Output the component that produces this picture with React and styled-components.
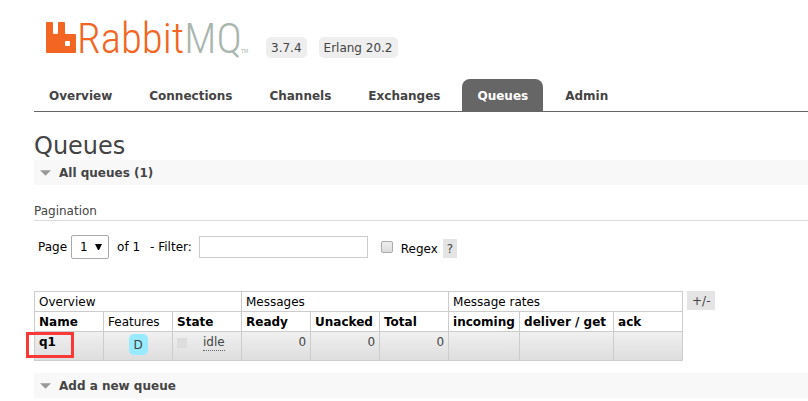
import React from "react";
import styled, { createGlobalStyle } from "styled-components";

const GlobalStyle = createGlobalStyle`
  *, *::before, *::after { box-sizing: border-box; }
  body {
    margin: 0;
    background: #fff;
    color: #444;
    font: 12px/16px Verdana, "DejaVu Sans", sans-serif;
  }
  #root { overflow: hidden; }
`;

const Page = styled.div`
  padding: 8px 0 0 34px;
`;

const Header = styled.header`
  display: flex;
  align-items: flex-end;
`;

const LogoLink = styled.a`
  display: block;
  width: 224px;
  height: 58px;
  margin-right: 8px;
`;

const Versions = styled.div`
  display: flex;
  gap: 12px;
  margin-bottom: 8px;
`;

const Version = styled.span`
  padding: 1px 5px;
  height: 21px;
  border-radius: 5px;
  background: #eee;
  line-height: 20px;
`;

const Tabs = styled.nav`
  display: flex;
  gap: 7px;
  margin-top: 13px;
  border-bottom: 1px solid #666;
`;

const Tab = styled.a`
  padding: 9px 15px 7px;
  border-radius: 8px 8px 0 0;
  font-weight: bold;
  text-decoration: none;
  color: ${(p) => (p.$active ? "#fff" : "#444")};
  background: ${(p) => (p.$active ? "#666" : "transparent")};
`;

const Title = styled.h1`
  margin: 21px 0 0;
  font-size: 24px;
  line-height: 27px;
  font-weight: normal;
`;

const SectionToggle = styled.button`
  display: flex;
  align-items: center;
  gap: 8px;
  width: 100%;
  height: 25px;
  padding: 0 6px;
  border: 0;
  background: #f8f8f8;
  color: #444;
  font: inherit;
  font-weight: bold;
  text-align: left;
`;

const Arrow = styled.svg`
  width: 11px;
  height: 6px;
  fill: #999;
`;

const Subheading = styled.h3`
  margin: 18px 0 0;
  border-bottom: 1px solid #ddd;
  font-size: 12px;
  line-height: 17px;
  font-weight: normal;
`;

const Filters = styled.form`
  display: flex;
  align-items: center;
  height: 24px;
  margin: 14px 0 0 4px;
  color: #000;
`;

const PageLabel = styled.label`
  display: flex;
  align-items: center;
  gap: 4px;
`;

const SelectBox = styled.span`
  display: grid;
  align-items: center;
  width: 38px;
`;

const Select = styled.select`
  grid-area: 1 / 1;
  appearance: none;
  width: 100%;
  height: 24px;
  padding: 0 8px;
  border: 1px solid #aaa;
  border-radius: 2px;
  background: #fff;
  color: #000;
  font: inherit;
`;

const SelectArrow = styled.svg`
  grid-area: 1 / 1;
  justify-self: end;
  width: 7px;
  height: 6px;
  margin-right: 7px;
  pointer-events: none;
`;

const PageCount = styled.span`
  margin: 0 10px 0 8px;
`;

const FilterLabel = styled.label`
  display: flex;
  align-items: center;
  gap: 7px;
`;

const FilterInput = styled.input`
  width: 169px;
  height: 22px;
  padding: 2px;
  border: 1px solid #ccc;
  font: inherit;
`;

const RegexLabel = styled.label`
  display: flex;
  align-items: center;
  gap: 8px;
  margin: 0 5px 0 13px;
  padding-top: 3px;
`;

const Checkbox = styled.input`
  appearance: none;
  width: 12px;
  height: 12px;
  margin: 0 0 4px;
  border: 1px solid #aaa;
  border-radius: 2px;
  background: linear-gradient(#eee, #ddd);
`;

const GrayButton = styled.button`
  flex: none;
  height: 19px;
  padding: 0 ${(p) => (p.$wide ? 5 : 4)}px;
  border: 0;
  background: #e4e4e4;
  color: #444;
  font: inherit;
`;

const HelpButton = styled(GrayButton)`
  margin-top: 3px;
`;

const TableArea = styled.div`
  display: flex;
  align-items: flex-start;
  gap: 4px;
  margin: 32px 0 12px;
`;

const Table = styled.table`
  border-collapse: collapse;
  table-layout: fixed;
  width: 649px;
  color: #000;
`;

const Group = styled.th`
  height: 20px;
  padding: 1px 4px;
  border: 1px solid #ccc;
  font-weight: normal;
  text-align: left;
`;

const Column = styled.th`
  height: 20px;
  padding: 1px 4px;
  border: 1px solid #ccc;
  font-weight: ${(p) => (p.$plain ? "normal" : "bold")};
  text-align: left;
  white-space: nowrap;
`;

const Col = styled.col`
  width: ${(p) => p.$width || 69}px;
`;

const Row = styled.tr`
  background: linear-gradient(#f0f0f0, #ddd);
`;

const Cell = styled.td`
  height: 29px;
  padding: 2px 4px;
  border: 1px solid #ccc;
  vertical-align: top;
  color: #444;
  text-align: ${(p) => p.$align || "left"};
`;

const NameCell = styled(Cell)`
  position: relative;
`;

const QueueLink = styled.a`
  color: #000;
  font-weight: bold;
  text-decoration: none;
`;

const Highlight = styled.span`
  position: absolute;
  left: -9px;
  top: 0;
  width: 48px;
  height: 26px;
  border: 3px solid #f93838;
  pointer-events: none;
`;

const Feature = styled.abbr`
  display: block;
  width: 19px;
  height: 21px;
  margin: 0 auto;
  padding-top: 2px;
  border-radius: 5px;
  background: #98ebff;
  line-height: 18px;
  text-decoration: none;
`;

const State = styled.div`
  display: flex;
  align-items: center;
  gap: 16px;
`;

const StateSquare = styled.span`
  width: 10px;
  height: 10px;
  background: #ddd;
`;

const StateText = styled.abbr`
  border-bottom: 1px dotted #666;
  line-height: 16px;
  text-decoration: none;
`;

const LogoText = styled.text`
  font-family: "Roboto Condensed", Roboto, sans-serif;
  font-weight: 300;
  font-size: 43px;
  fill: #f26522;
`;

const Trademark = styled.text`
  font: 5px "Liberation Sans", sans-serif;
  fill: #a9b6ae;
`;

function Logo() {
  return (
    <svg width="224" height="58" viewBox="34 8 224 58" role="img" aria-label="RabbitMQ">
      <path
        fill="#f26522"
        fillRule="evenodd"
        d="M47 22h5q1 0 1 1v10q0 1 1 1h3q1 0 1-1V23q0-1 1-1h5q1 0 1 1v10q0 1 1 1h9q1 0 1 1v17q0 1-1 1H47q-1 0-1-1V23q0-1 1-1zM66 41q-1 0-1 1v3q0 1 1 1h3q1 0 1-1v-3q0-1-1-1z"
      />
      <LogoText x="77" y="53">
        Rabbit
        <tspan fill="#a9b6ae">MQ</tspan>
      </LogoText>
      <Trademark x="241" y="53">TM</Trademark>
    </svg>
  );
}

function Section({ children }) {
  return (
    <SectionToggle type="button">
      <Arrow viewBox="0 0 12 6" aria-hidden="true">
        <path d="M0 0h12L6 6z" />
      </Arrow>
      {children}
    </SectionToggle>
  );
}

const tabs = ["Overview", "Connections", "Channels", "Exchanges", "Queues", "Admin"];
const columns = ["Name", "Features", "State", "Ready", "Unacked", "Total", "incoming", "deliver / get", "ack"];
const widths = [69, 69, 69, 69, 69, 69, 71, 94, 69];

export default function App() {
  return (
    <>
      <GlobalStyle />
      <Page>
        <Header>
          <LogoLink href="#">
            <Logo />
          </LogoLink>
          <Versions>
            <Version>3.7.4</Version>
            <Version>Erlang 20.2</Version>
          </Versions>
        </Header>
        <Tabs>
          {tabs.map((t) => (
            <Tab key={t} href="#" $active={t === "Queues"}>
              {t}
            </Tab>
          ))}
        </Tabs>
        <main>
          <Title>Queues</Title>
          <Section>All queues (1)</Section>
          <Subheading>Pagination</Subheading>
          <Filters>
            <PageLabel>
              Page
              <SelectBox>
                <Select defaultValue="1">
                  <option>1</option>
                </Select>
                <SelectArrow viewBox="0 0 7 6" aria-hidden="true">
                  <path d="M0 0h7L4 6H3z" />
                </SelectArrow>
              </SelectBox>
            </PageLabel>
            <PageCount>of 1</PageCount>
            <FilterLabel>
              - Filter:
              <FilterInput type="text" />
            </FilterLabel>
            <RegexLabel>
              <Checkbox type="checkbox" />
              Regex
            </RegexLabel>
            <HelpButton type="button">?</HelpButton>
          </Filters>
          <TableArea>
            <Table>
              <colgroup>
                {widths.map((w, i) => (
                  <Col key={i} $width={w} />
                ))}
              </colgroup>
              <thead>
                <tr>
                  <Group colSpan={3}>Overview</Group>
                  <Group colSpan={3}>Messages</Group>
                  <Group colSpan={3}>Message rates</Group>
                </tr>
                <tr>
                  {columns.map((c) => (
                    <Column key={c} $plain={c === "Features"}>
                      {c}
                    </Column>
                  ))}
                </tr>
              </thead>
              <tbody>
                <Row>
                  <NameCell>
                    <QueueLink href="#">q1</QueueLink>
                    <Highlight />
                  </NameCell>
                  <Cell $align="center">
                    <Feature>D</Feature>
                  </Cell>
                  <Cell>
                    <State>
                      <StateSquare />
                      <StateText>idle</StateText>
                    </State>
                  </Cell>
                  <Cell $align="right">0</Cell>
                  <Cell $align="right">0</Cell>
                  <Cell $align="right">0</Cell>
                  <Cell />
                  <Cell />
                  <Cell />
                </Row>
              </tbody>
            </Table>
            <GrayButton type="button" $wide>+/-</GrayButton>
          </TableArea>
          <Section>Add a new queue</Section>
        </main>
      </Page>
    </>
  );
}
